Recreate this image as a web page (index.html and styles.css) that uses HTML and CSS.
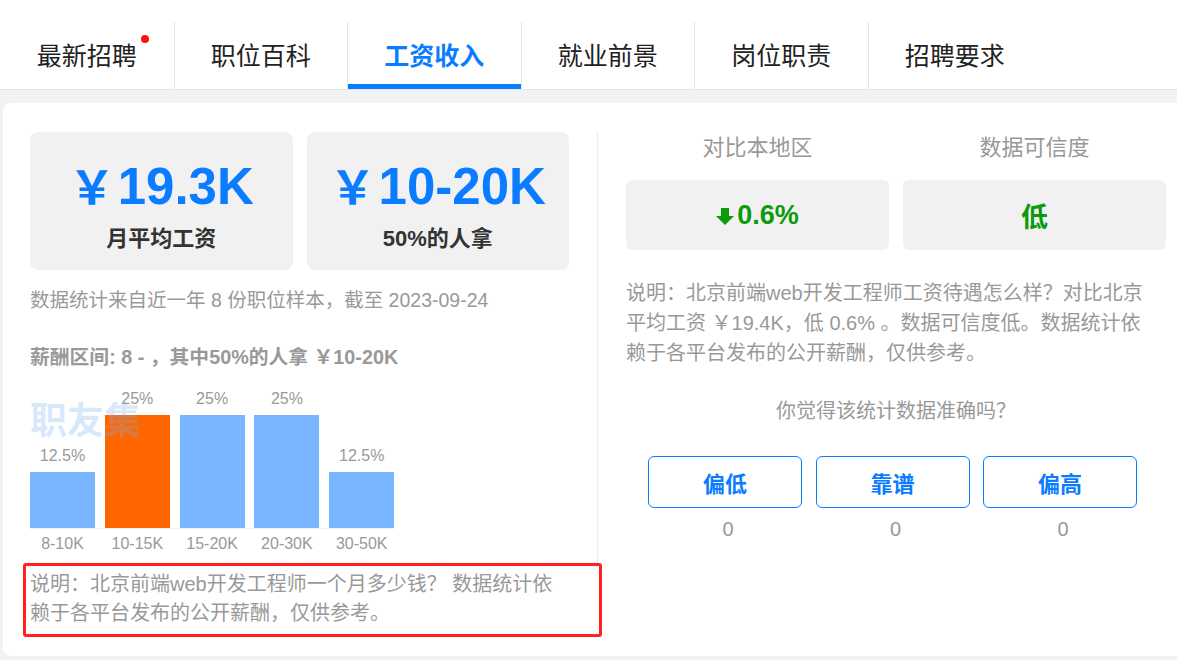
FILE: index.html
```html
<!DOCTYPE html>
<html lang="zh-CN">
<head>
<meta charset="utf-8">
<title>工资收入</title>
<link rel="stylesheet" href="styles.css">
</head>
<body>
<nav class="tabs">
  <div class="tab"><span class="tab-text">最新招聘<i class="dot"></i></span></div>
  <div class="tab">职位百科</div>
  <div class="tab active">工资收入</div>
  <div class="tab">就业前景</div>
  <div class="tab">岗位职责</div>
  <div class="tab">招聘要求</div>
</nav>
<main class="main">
  <section class="card">
    <div class="col-left">
      <div class="stats">
        <div class="stat">
          <div class="stat-num"><span class="yen">￥</span>19.3K</div>
          <div class="stat-label">月平均工资</div>
        </div>
        <div class="stat">
          <div class="stat-num"><span class="yen">￥</span>10-20K</div>
          <div class="stat-label">50%的人拿</div>
        </div>
      </div>
      <p class="note">数据统计来自近一年 8 份职位样本，截至 2023-09-24</p>
      <p class="range">薪酬区间: 8 - ，其中50%的人拿 ￥10-20K</p>
      <div class="chart">
        <div class="watermark">职友集</div>
        <div class="bars">
          <div class="bar-col"><span class="pct">12.5%</span><div class="bar" style="height:56px"></div></div>
          <div class="bar-col"><span class="pct">25%</span><div class="bar hot" style="height:113px"></div></div>
          <div class="bar-col"><span class="pct">25%</span><div class="bar" style="height:113px"></div></div>
          <div class="bar-col"><span class="pct">25%</span><div class="bar" style="height:113px"></div></div>
          <div class="bar-col"><span class="pct">12.5%</span><div class="bar" style="height:56px"></div></div>
        </div>
        <div class="axis">
          <span>8-10K</span><span>10-15K</span><span>15-20K</span><span>20-30K</span><span>30-50K</span>
        </div>
      </div>
      <div class="explain">说明：北京前端web开发工程师一个月多少钱？ 数据统计依赖于各平台发布的公开薪酬，仅供参考。</div>
    </div>
    <div class="col-right">
      <div class="compare">
        <div class="cmp">
          <div class="cmp-title">对比本地区</div>
          <div class="cmp-box"><svg class="arrow" viewBox="0 0 18 17" width="18" height="17"><path d="M5 0h8v8h5L9 17 0 8h5z" fill="#0b9a0b"/></svg>0.6%</div>
        </div>
        <div class="cmp">
          <div class="cmp-title">数据可信度</div>
          <div class="cmp-box">低</div>
        </div>
      </div>
      <p class="desc">说明：北京前端web开发工程师工资待遇怎么样？对比北京平均工资 ￥19.4K，低 0.6% 。数据可信度低。数据统计依赖于各平台发布的公开薪酬，仅供参考。</p>
      <p class="question">你觉得该统计数据准确吗？</p>
      <div class="votes">
        <div class="vote"><button class="vote-btn">偏低</button><span class="count">0</span></div>
        <div class="vote"><button class="vote-btn">靠谱</button><span class="count">0</span></div>
        <div class="vote"><button class="vote-btn">偏高</button><span class="count">0</span></div>
      </div>
    </div>
  </section>
</main>
</body>
</html>
```

FILE: styles.css
```css
html, body {
  margin: 0;
  padding: 0;
  overflow: hidden;
  width: 1177px;
  height: 660px;
  background: #f2f2f2;
  font-family: "Liberation Sans", "Noto Sans CJK SC", sans-serif;
}

.tabs {
  display: flex;
  align-items: stretch;
  height: 67px;
  padding-top: 22px;
  background: #fff;
  border-bottom: 1px solid #e4e4e4;
}

.tab {
  width: 173.5px;
  flex: none;
  display: flex;
  align-items: center;
  justify-content: center;
  font-size: 25px;
  color: #222;
  border-left: 1px solid #e4e4e4;
  box-sizing: border-box;
  padding-bottom: 3px;
}

.tab:first-child {
  border-left: none;
}

.tab.active {
  color: #0a7cff;
  font-weight: bold;
  box-shadow: inset 0 -5px 0 #0a7cff;
}

.tab-text {
  position: relative;
}

.dot {
  position: absolute;
  right: -12px;
  top: -1px;
  width: 8px;
  height: 8px;
  border-radius: 50%;
  background: #ff1010;
}

.main {
  padding: 13px 0 0 3px;
}

.card {
  display: flex;
  width: 1190px;
  height: 553px;
  box-sizing: border-box;
  padding: 29px 27px 0 27px;
  background: #fff;
  border-radius: 8px;
}

.col-left {
  width: 568px;
  box-sizing: border-box;
  padding-right: 28px;
  border-right: 1px solid #ececec;
  height: 433px;
  flex: none;
}

.stats {
  display: flex;
  gap: 14px;
}

.stat {
  width: 263px;
  height: 138px;
  box-sizing: border-box;
  padding-top: 22px;
  background: #f1f1f1;
  border-radius: 8px;
  text-align: center;
}

.stat-num {
  font-size: 51px;
  line-height: 60px;
  font-weight: bold;
  color: #0a7cff;
}

.yen {
  font-family: "Noto Sans CJK SC", sans-serif;
  font-size: 46px;
  margin-right: 3px;
}

.stat-label {
  margin-top: 8px;
  font-size: 22px;
  line-height: 28px;
  font-weight: bold;
  color: #333;
}

.note {
  margin: 15px 0 0;
  font-size: 19.5px;
  line-height: 30px;
  color: #999;
}

.range {
  margin: 27px 0 0;
  font-size: 19.8px;
  line-height: 30px;
  font-weight: bold;
  color: #999;
}

.chart {
  position: relative;
  margin-top: 17px;
}

.watermark {
  position: absolute;
  left: 0;
  top: 11px;
  font-size: 37px;
  line-height: 44px;
  font-weight: bold;
  color: rgba(117, 176, 243, 0.29);
  z-index: 2;
  pointer-events: none;
}

.bars {
  display: flex;
  align-items: flex-end;
  gap: 9.8px;
  height: 139px;
  width: 364px;
  border-bottom: 1px solid #eef1f5;
}

.bar-col {
  width: 65px;
  display: flex;
  flex-direction: column;
  align-items: center;
}

.pct {
  font-size: 16px;
  line-height: 20px;
  color: #999;
  margin-bottom: 6px;
}

.bar {
  width: 65px;
  background: #78b6ff;
}

.bar.hot {
  background: #ff6600;
}

.axis {
  display: flex;
  gap: 9.8px;
  margin-top: 5px;
}

.axis span {
  width: 65px;
  text-align: center;
  font-size: 16px;
  line-height: 20px;
  color: #999;
}

.explain {
  margin: 9px 0 0 -7px;
  width: 579px;
  box-sizing: border-box;
  padding: 4px 42px 6px 4px;
  border: 3px solid #ff2020;
  border-radius: 3px;
  font-size: 20px;
  line-height: 29px;
  color: #999;
  position: relative;
}

.col-right {
  width: 540px;
  flex: none;
  padding-left: 28px;
}

.compare {
  display: flex;
  gap: 14px;
}

.cmp {
  width: 263px;
}

.cmp-title {
  text-align: center;
  font-size: 22px;
  line-height: 30px;
  color: #999;
  margin-top: 1px;
}

.cmp-box {
  margin-top: 17px;
  height: 70px;
  display: flex;
  align-items: center;
  justify-content: center;
  background: #f1f1f1;
  border-radius: 6px;
  font-size: 27px;
  font-weight: bold;
  color: #0b9a0b;
}

.arrow {
  margin-right: 3px;
  margin-top: 2px;
}

.desc {
  margin: 28px 0 0;
  padding-right: 18px;
  font-size: 20px;
  line-height: 30px;
  color: #999;
}

.question {
  margin: 28px 0 0;
  text-align: center;
  font-size: 20px;
  line-height: 30px;
  color: #999;
}

.votes {
  display: flex;
  gap: 13.5px;
  margin: 30px 0 0 22px;
}

.vote {
  width: 154px;
  display: flex;
  flex-direction: column;
  align-items: center;
}

.vote-btn {
  width: 154px;
  height: 52px;
  border: 1px solid #0a7cff;
  border-radius: 6px;
  background: #fff;
  color: #0a7cff;
  font-family: "Liberation Sans", "Noto Sans CJK SC", sans-serif;
  font-size: 22px;
  font-weight: bold;
  padding: 0;
}

.count {
  margin-top: 9px;
  font-size: 20px;
  line-height: 24px;
  color: #999;
  padding-left: 6px;
}
```
